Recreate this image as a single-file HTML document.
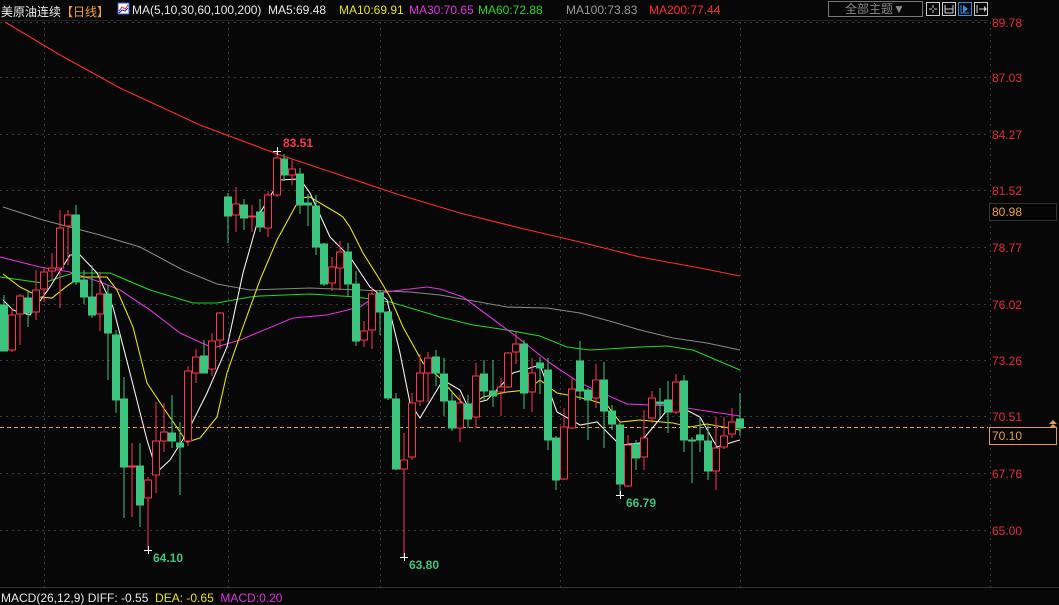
<!DOCTYPE html>
<html><head><meta charset="utf-8"><style>
html,body{margin:0;padding:0;background:#070707;width:1059px;height:598px;overflow:hidden;font-family:"Liberation Sans","Noto Sans CJK SC",sans-serif}
.t{position:absolute;top:3px;font-size:12px;white-space:nowrap}
</style></head><body>
<svg width="1059" height="598" style="position:absolute;left:0;top:0">
<rect x="0" y="0" width="1059" height="598" fill="#070707"/>
<g stroke="#3a3a3a" stroke-width="1" stroke-dasharray="2,4">
<line x1="0" y1="22.5" x2="986" y2="22.5"/><line x1="0" y1="77.5" x2="986" y2="77.5"/><line x1="0" y1="134.5" x2="986" y2="134.5"/><line x1="0" y1="190.5" x2="986" y2="190.5"/><line x1="0" y1="247.5" x2="986" y2="247.5"/><line x1="0" y1="304.5" x2="986" y2="304.5"/><line x1="0" y1="360.5" x2="986" y2="360.5"/><line x1="0" y1="416.5" x2="986" y2="416.5"/><line x1="0" y1="473.5" x2="986" y2="473.5"/><line x1="0" y1="530.5" x2="986" y2="530.5"/>
<line x1="44.5" y1="22" x2="44.5" y2="588"/><line x1="228.5" y1="22" x2="228.5" y2="588"/><line x1="380.5" y1="22" x2="380.5" y2="588"/><line x1="560.5" y1="22" x2="560.5" y2="588"/><line x1="740.5" y1="22" x2="740.5" y2="588"/>
<line x1="990.5" y1="22" x2="990.5" y2="588"/>
</g>
<line x1="0" y1="20.5" x2="988" y2="20.5" stroke="#222"/>
<line x1="0" y1="427.5" x2="988" y2="427.5" stroke="#e89a3c" stroke-dasharray="4,3"/>
<line x1="0" y1="587.5" x2="1059" y2="587.5" stroke="#333"/>
<g fill="none" stroke-width="1.1">
<polyline stroke="#ff2a2a" points="5,22 60,55 120,88 200,125 280,155 340,175 400,195 460,213 520,228 580,242 640,257 700,268 740,276"/>
<polyline stroke="#888" points="3,207 43,220 100,235 140,247 183,270 217,284 250,290 310,288 360,290 410,292 440,295 507,307 547,308 580,313 613,322 640,330 673,338 707,343 740,350"/>
<polyline stroke="#22d622" points="0,277 43,283 73,273 110,273 150,290 193,303 217,303 250,297 260,296 310,294 357,297 390,302 427,313 440,317 473,325 507,330 540,336 567,347 590,350 640,347 667,346 693,350 740,370"/>
<polyline stroke="#e030e0" points="0,257 40,267 70,272 100,282 120,290 150,310 180,333 213,348 240,340 293,318 327,315 360,307 380,293 393,291 427,287 440,289 463,297 490,317 517,337 550,363 580,383 607,395 627,404 673,406 713,412 740,416"/>
<polyline stroke="#e6e600" points="3,274 20,287 40,297 52,298 67,286 80,277 107,277 117,290 133,327 147,383 167,413 187,442 200,438 217,417 227,373 243,327 260,280 277,240 300,198 310,197 320,203 337,213 343,217 350,227 363,253 380,280 390,297 403,327 423,363 440,378 453,393 467,408 483,397 507,392 527,390 540,380 557,393 573,396 590,400 607,405 620,422 640,420 673,423 690,427 707,424 740,430"/>
<polyline stroke="#f0f0f0" points="3,300 13,310 30,315 50,287 70,255 80,255 97,273 113,307 130,373 147,440 157,472 170,460 187,433 207,393 227,347 243,273 260,213 280,180 300,179 310,193 330,237 350,257 370,287 387,300 400,353 410,403 420,418 443,380 460,390 467,405 487,400 513,373 540,365 557,412 580,425 597,422 620,445 640,443 673,403 700,417 717,447 733,442 740,440"/>
</g>
<g stroke-width="1">
<g fill="#3cc57e" stroke="#3cc57e">
<line x1="4" y1="295" x2="4" y2="351"/><rect x="0.5" y="305" width="7" height="46"/>
<line x1="28" y1="290" x2="28" y2="327"/><rect x="24.5" y="298" width="7" height="15"/>
<line x1="76" y1="205" x2="76" y2="285"/><rect x="72.5" y="215" width="7" height="67"/>
<line x1="84" y1="270" x2="84" y2="304"/><rect x="80.5" y="280" width="7" height="17"/>
<line x1="92" y1="265" x2="92" y2="318"/><rect x="88.5" y="297" width="7" height="18"/>
<line x1="108" y1="285" x2="108" y2="380"/><rect x="104.5" y="294" width="7" height="39"/>
<line x1="116" y1="330" x2="116" y2="413"/><rect x="112.5" y="335" width="7" height="65"/>
<line x1="124" y1="377" x2="124" y2="518"/><rect x="120.5" y="399" width="7" height="68"/>
<line x1="140" y1="443" x2="140" y2="527"/><rect x="136.5" y="466" width="7" height="39"/>
<line x1="172" y1="395" x2="172" y2="448"/><rect x="168.5" y="433" width="7" height="8"/>
<line x1="180" y1="422" x2="180" y2="495"/><rect x="176.5" y="443" width="7" height="4"/>
<line x1="204" y1="340" x2="204" y2="373"/><rect x="200.5" y="356" width="7" height="17"/>
<line x1="228" y1="193" x2="228" y2="243"/><rect x="224.5" y="197" width="7" height="19"/>
<line x1="244" y1="199" x2="244" y2="230"/><rect x="240.5" y="205" width="7" height="13"/>
<line x1="260" y1="199" x2="260" y2="232"/><rect x="256.5" y="212" width="7" height="15"/>
<line x1="284" y1="154" x2="284" y2="181"/><rect x="280.5" y="159" width="7" height="16"/>
<line x1="300" y1="168" x2="300" y2="214"/><rect x="296.5" y="174" width="7" height="31"/>
<line x1="308" y1="194" x2="308" y2="226"/><rect x="304.5" y="203" width="7" height="2"/>
<line x1="316" y1="195" x2="316" y2="255"/><rect x="312.5" y="206" width="7" height="41"/>
<line x1="324" y1="243" x2="324" y2="286"/><rect x="320.5" y="244" width="7" height="40"/>
<line x1="348" y1="243" x2="348" y2="296"/><rect x="344.5" y="252" width="7" height="32"/>
<line x1="356" y1="271" x2="356" y2="346"/><rect x="352.5" y="284" width="7" height="57"/>
<line x1="380" y1="290" x2="380" y2="335"/><rect x="376.5" y="293" width="7" height="19"/>
<line x1="388" y1="311" x2="388" y2="400"/><rect x="384.5" y="312" width="7" height="86"/>
<line x1="396" y1="393" x2="396" y2="470"/><rect x="392.5" y="399" width="7" height="70"/>
<line x1="436" y1="350" x2="436" y2="386"/><rect x="432.5" y="357" width="7" height="16"/>
<line x1="444" y1="358" x2="444" y2="416"/><rect x="440.5" y="374" width="7" height="27"/>
<line x1="452" y1="392" x2="452" y2="431"/><rect x="448.5" y="401" width="7" height="27"/>
<line x1="468" y1="395" x2="468" y2="428"/><rect x="464.5" y="404" width="7" height="15"/>
<line x1="484" y1="360" x2="484" y2="400"/><rect x="480.5" y="374" width="7" height="17"/>
<line x1="493" y1="360" x2="493" y2="407"/><rect x="489.5" y="391" width="7" height="5"/>
<line x1="524" y1="340" x2="524" y2="409"/><rect x="520.5" y="344" width="7" height="49"/>
<line x1="540" y1="357" x2="540" y2="394"/><rect x="536.5" y="363" width="7" height="5"/>
<line x1="548" y1="358" x2="548" y2="450"/><rect x="544.5" y="370" width="7" height="70"/>
<line x1="556" y1="436" x2="556" y2="490"/><rect x="552.5" y="438" width="7" height="42"/>
<line x1="580" y1="341" x2="580" y2="400"/><rect x="576.5" y="361" width="7" height="30"/>
<line x1="588" y1="388" x2="588" y2="440"/><rect x="584.5" y="390" width="7" height="10"/>
<line x1="604" y1="362" x2="604" y2="448"/><rect x="600.5" y="380" width="7" height="31"/>
<line x1="612" y1="405" x2="612" y2="430"/><rect x="608.5" y="411" width="7" height="13"/>
<line x1="620" y1="423" x2="620" y2="495"/><rect x="616.5" y="425" width="7" height="59"/>
<line x1="636" y1="440" x2="636" y2="470"/><rect x="632.5" y="444" width="7" height="14"/>
<line x1="660" y1="388" x2="660" y2="418"/><rect x="656.5" y="402" width="7" height="2"/>
<line x1="668" y1="381" x2="668" y2="433"/><rect x="664.5" y="400" width="7" height="12"/>
<line x1="684" y1="375" x2="684" y2="452"/><rect x="680.5" y="381" width="7" height="59"/>
<line x1="692" y1="437" x2="692" y2="483"/><rect x="688.5" y="440" width="7" height="1"/>
<line x1="700" y1="418" x2="700" y2="452"/><rect x="696.5" y="435" width="7" height="5"/>
<line x1="708" y1="425" x2="708" y2="480"/><rect x="704.5" y="441" width="7" height="30"/>
<line x1="740" y1="393" x2="740" y2="436"/><rect x="736.5" y="419" width="7" height="9"/>
</g>
<g fill="#070707" stroke="#ff3352">
<line x1="12" y1="308" x2="12" y2="352"/><rect x="8.5" y="315" width="7" height="35"/>
<line x1="20" y1="294" x2="20" y2="345"/><rect x="16.5" y="296" width="7" height="18"/>
<line x1="36" y1="270" x2="36" y2="320"/><rect x="32.5" y="290" width="7" height="22"/>
<line x1="44" y1="268" x2="44" y2="302"/><rect x="40.5" y="272" width="7" height="17"/>
<line x1="52" y1="253" x2="52" y2="280"/><rect x="48.5" y="268" width="7" height="3"/>
<line x1="60" y1="210" x2="60" y2="308"/><rect x="56.5" y="228" width="7" height="40"/>
<line x1="68" y1="210" x2="68" y2="265"/><rect x="64.5" y="215" width="7" height="11"/>
<line x1="100" y1="272" x2="100" y2="331"/><rect x="96.5" y="294" width="7" height="20"/>
<line x1="132" y1="443" x2="132" y2="517"/><rect x="128.5" y="466" width="7" height="1"/>
<line x1="148" y1="477" x2="148" y2="550"/><rect x="144.5" y="480" width="7" height="18"/>
<line x1="156" y1="402" x2="156" y2="493"/><rect x="152.5" y="441" width="7" height="34"/>
<line x1="164" y1="403" x2="164" y2="452"/><rect x="160.5" y="432" width="7" height="9"/>
<line x1="188" y1="366" x2="188" y2="446"/><rect x="184.5" y="371" width="7" height="70"/>
<line x1="196" y1="349" x2="196" y2="383"/><rect x="192.5" y="357" width="7" height="16"/>
<line x1="212" y1="333" x2="212" y2="376"/><rect x="208.5" y="341" width="7" height="28"/>
<line x1="220" y1="312" x2="220" y2="349"/><rect x="216.5" y="313" width="7" height="27"/>
<line x1="236" y1="187" x2="236" y2="232"/><rect x="232.5" y="204" width="7" height="11"/>
<line x1="252" y1="205" x2="252" y2="232"/><rect x="248.5" y="216" width="7" height="1"/>
<line x1="268" y1="191" x2="268" y2="237"/><rect x="264.5" y="195" width="7" height="33"/>
<line x1="277" y1="151" x2="277" y2="197"/><rect x="273.5" y="158" width="7" height="37"/>
<line x1="292" y1="160" x2="292" y2="185"/><rect x="288.5" y="169" width="7" height="6"/>
<line x1="332" y1="257" x2="332" y2="291"/><rect x="328.5" y="267" width="7" height="16"/>
<line x1="340" y1="241" x2="340" y2="290"/><rect x="336.5" y="252" width="7" height="16"/>
<line x1="364" y1="321" x2="364" y2="347"/><rect x="360.5" y="331" width="7" height="9"/>
<line x1="372" y1="287" x2="372" y2="349"/><rect x="368.5" y="294" width="7" height="36"/>
<line x1="404" y1="433" x2="404" y2="557"/><rect x="400.5" y="460" width="7" height="9"/>
<line x1="412" y1="393" x2="412" y2="460"/><rect x="408.5" y="403" width="7" height="54"/>
<line x1="420" y1="354" x2="420" y2="406"/><rect x="416.5" y="373" width="7" height="28"/>
<line x1="428" y1="352" x2="428" y2="402"/><rect x="424.5" y="358" width="7" height="15"/>
<line x1="460" y1="395" x2="460" y2="442"/><rect x="456.5" y="403" width="7" height="25"/>
<line x1="476" y1="363" x2="476" y2="428"/><rect x="472.5" y="376" width="7" height="41"/>
<line x1="501" y1="378" x2="501" y2="416"/><rect x="497.5" y="387" width="7" height="5"/>
<line x1="508" y1="352" x2="508" y2="388"/><rect x="504.5" y="353" width="7" height="34"/>
<line x1="516" y1="332" x2="516" y2="364"/><rect x="512.5" y="344" width="7" height="8"/>
<line x1="532" y1="358" x2="532" y2="412"/><rect x="528.5" y="373" width="7" height="19"/>
<line x1="564" y1="408" x2="564" y2="480"/><rect x="560.5" y="427" width="7" height="52"/>
<line x1="572" y1="378" x2="572" y2="429"/><rect x="568.5" y="389" width="7" height="39"/>
<line x1="596" y1="364" x2="596" y2="408"/><rect x="592.5" y="380" width="7" height="18"/>
<line x1="628" y1="435" x2="628" y2="487"/><rect x="624.5" y="445" width="7" height="41"/>
<line x1="644" y1="410" x2="644" y2="470"/><rect x="640.5" y="438" width="7" height="19"/>
<line x1="652" y1="391" x2="652" y2="423"/><rect x="648.5" y="398" width="7" height="20"/>
<line x1="676" y1="374" x2="676" y2="414"/><rect x="672.5" y="382" width="7" height="30"/>
<line x1="716" y1="417" x2="716" y2="490"/><rect x="712.5" y="448" width="7" height="23"/>
<line x1="724" y1="417" x2="724" y2="449"/><rect x="720.5" y="436" width="7" height="11"/>
<line x1="732" y1="408" x2="732" y2="438"/><rect x="728.5" y="422" width="7" height="12"/>
</g>
</g>
<g stroke="#fff" stroke-width="1">
<line x1="273" y1="151.5" x2="281" y2="151.5"/><line x1="277.5" y1="147" x2="277.5" y2="155"/>
<line x1="144" y1="550.5" x2="152" y2="550.5"/><line x1="148.5" y1="546" x2="148.5" y2="554"/>
<line x1="400" y1="557.5" x2="408" y2="557.5"/><line x1="404.5" y1="553" x2="404.5" y2="561"/>
<line x1="616" y1="495.5" x2="624" y2="495.5"/><line x1="620.5" y1="491" x2="620.5" y2="499"/>
</g>
<g font-family="Liberation Sans,sans-serif" font-size="12" font-weight="bold">
<text x="283" y="147" fill="#ff3352">83.51</text>
<text x="153" y="562" fill="#3cc57e">64.10</text>
<text x="409" y="569" fill="#3cc57e">63.80</text>
<text x="626" y="507" fill="#3cc57e">66.79</text>
</g>
<g font-family="Liberation Sans,sans-serif" font-size="12" fill="#e8283c">
<text x="992" y="27">89.78</text><text x="992" y="82">87.03</text><text x="992" y="139">84.27</text><text x="992" y="195">81.52</text><text x="992" y="252">78.77</text><text x="992" y="309">76.02</text><text x="992" y="365">73.26</text><text x="992" y="421">70.51</text><text x="992" y="478">67.76</text><text x="992" y="535">65.00</text>
</g>
<rect x="989.5" y="203.5" width="67" height="17" fill="#050505" stroke="#333"/>
<text x="992" y="216" font-family="Liberation Sans,sans-serif" font-size="12" fill="#e8a040">80.98</text>
<rect x="989.5" y="427.5" width="67" height="17" fill="#050505" stroke="#e89a3c"/>
<text x="992" y="440" font-family="Liberation Sans,sans-serif" font-size="12" fill="#e8a040">70.10</text>
<path d="M1049,424 l4,-4 l4,4 z M1049,428 l4,-4 l4,4 z" fill="#e8a040"/>
<rect x="828.5" y="1.5" width="94" height="15" fill="#070707" stroke="#777"/>
<text x="845" y="13" font-family="Liberation Sans,Noto Sans CJK SC,sans-serif" font-size="12" fill="#888">全部主题▼</text>
<g fill="none" stroke="#ccc">
<rect x="926.5" y="2.5" width="13" height="13"/>
<path d="M933 5v3M933 10v3M929 9h3M934 9h3"/>
<rect x="942.5" y="2.5" width="13" height="13"/>
<path d="M945 5v8M953 5v8M945 9h8M945 13h8"/>
<rect x="958.5" y="2.5" width="13" height="13" stroke="#2e8ee0"/>
<path d="M961 5v8h8" stroke="#2e8ee0"/><path d="M963 5l5 4-5 4z" fill="#2e8ee0" stroke="none"/>
<rect x="974.5" y="2.5" width="13" height="13"/>
<path d="M977 5v8M979 9h6"/><path d="M984 6l3 3-3 3z" fill="#ccc" stroke="none"/>
</g>
<rect x="118" y="3" width="11" height="11" fill="#fff" stroke="#3355cc"/>
<path d="M119 11l3-4 3 2 3-4" stroke="#d22" fill="none"/>
<path d="M119 13l3-3 3 1 3-3" stroke="#22a" fill="none"/>
</svg>
<div class="t" style="left:1px;color:#f0f0f0">美原油连续<span style="color:#f0a030">【日线】</span></div>
<div class="t" style="left:132px;color:#e8e8e8">MA(5,10,30,60,100,200)</div>
<div class="t" style="left:268px;color:#e8e8e8">MA5:69.48</div>
<div class="t" style="left:339px;color:#e6e600">MA10:69.91</div>
<div class="t" style="left:409px;color:#e030e0">MA30:70.65</div>
<div class="t" style="left:478px;color:#22d622">MA60:72.88</div>
<div class="t" style="left:566px;color:#999">MA100:73.83</div>
<div class="t" style="left:649px;color:#ff2a2a">MA200:77.44</div>
<div class="t" style="top:591px;left:1px;color:#e8e8e8">MACD(26,12,9) DIFF: -0.55 &nbsp;<span style="color:#e6e600">DEA: -0.65</span> &nbsp;<span style="color:#e030e0">MACD:0.20</span></div>
</body></html>
